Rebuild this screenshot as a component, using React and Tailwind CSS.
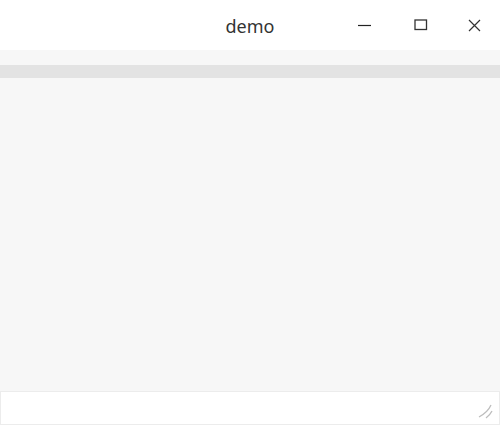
export default function App() {
  return (
    <div className="w-[500px] h-[425px] flex flex-col bg-[#f7f7f7] overflow-hidden font-['Noto_Sans',sans-serif]">
      {/* title bar */}
      <div className="h-[50px] bg-white flex items-center relative shrink-0">
        <div className="flex-1 text-center text-[18px] text-[#333] leading-none pt-[1px]">demo</div>
        <div className="absolute right-0 top-0 h-[50px] flex items-center">
          <button className="w-[54px] h-[50px] flex items-center justify-center">
            <svg width="14" height="14" viewBox="0 0 14 14">
              <path d="M0 7.5h13" stroke="#222" strokeWidth="1.2" />
            </svg>
          </button>
          <button className="w-[54px] h-[50px] flex items-center justify-center pl-[3px]">
            <svg width="14" height="12" viewBox="0 0 14 12">
              <rect x="1" y="1" width="11.5" height="9.5" fill="none" stroke="#333" strokeWidth="1.3" />
            </svg>
          </button>
          <button className="w-[54px] h-[50px] flex items-center justify-center pl-[3px]">
            <svg width="13" height="13" viewBox="0 0 13 13">
              <path d="M1 1l11 11M12 1L1 12" stroke="#333" strokeWidth="1.2" />
            </svg>
          </button>
        </div>
      </div>
      <div className="h-[15px] shrink-0" />
      <div className="h-[13px] bg-[#e3e3e3] shrink-0" />
      <div className="flex-1" />
      {/* input area */}
      <div className="h-[34px] shrink-0 bg-white border border-[#ececec] relative">
        <svg className="absolute right-[6px] bottom-[5px]" width="16" height="16" viewBox="0 0 16 16">
          <path d="M14 2Q11 9 2 14M15 8Q13 12 9 15" fill="none" stroke="#bdbdbd" strokeWidth="1.3" />
        </svg>
      </div>
    </div>
  );
}
